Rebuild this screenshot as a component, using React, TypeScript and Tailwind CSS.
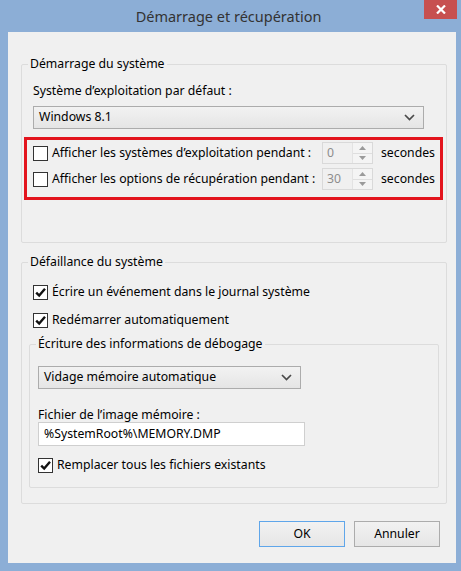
import type { ReactNode } from "react";

const font = { fontFamily: '"Noto Sans", "Open Sans", sans-serif' };

function Check({ checked }: { checked: boolean }) {
  return (
    <span className="flex h-[15px] w-[15px] shrink-0 items-center justify-center border border-[#333333] bg-white">
      {checked && (
        <svg width="13" height="13" viewBox="0 0 13 13">
          <path
            d="M2.2 6.6 L5.2 9.6 L11 2.8"
            fill="none"
            stroke="#111"
            strokeWidth="2.4"
            strokeLinejoin="miter"
          />
        </svg>
      )}
    </span>
  );
}

function Chevron() {
  return (
    <svg width="11" height="7" viewBox="0 0 11 7">
      <path d="M1 1 L5.5 5.5 L10 1" fill="none" stroke="#4a4a4a" strokeWidth="1.7" />
    </svg>
  );
}

function Combo({ value, className }: { value: string; className: string }) {
  return (
    <div
      className={`flex h-[23px] items-center justify-between border border-[#acacac] bg-gradient-to-b from-[#f2f2f2] to-[#e5e5e5] pl-[5px] pr-[8px] text-[12.25px] text-black ${className}`}
    >
      <span>{value}</span>
      <Chevron />
    </div>
  );
}

function Spinner({ value }: { value: string }) {
  return (
    <div className="flex h-[22px] w-[51px] border border-[#d9d9d9]">
      <div className="flex flex-1 items-center pl-[4px] text-[12.25px] text-[#8d8d8d]">{value}</div>
      <div className="flex w-[20px] flex-col border-l border-[#e3e3e3] bg-[#f4f4f4]">
        <div className="flex flex-1 items-center justify-center border-b border-[#dedede]">
          <svg width="7" height="4" viewBox="0 0 7 4">
            <path d="M0 4 L3.5 0 L7 4 Z" fill="#9a9a9a" />
          </svg>
        </div>
        <div className="flex flex-1 items-center justify-center">
          <svg width="7" height="4" viewBox="0 0 7 4">
            <path d="M0 0 L3.5 4 L7 0 Z" fill="#9a9a9a" />
          </svg>
        </div>
      </div>
    </div>
  );
}

function CheckRow({ checked, label, className = "" }: { checked: boolean; label: string; className?: string }) {
  return (
    <div className={`flex h-[16px] items-center gap-[4px] text-[12.25px] text-black ${className}`}>
      <Check checked={checked} />
      <span>{label}</span>
    </div>
  );
}

function TimeoutRow({ label, value }: { label: string; value: string }) {
  return (
    <div className="flex h-[22px] items-center text-[12.25px] text-black">
      <div className="flex w-[289px] items-center gap-[4px] whitespace-nowrap">
        <Check checked={false} />
        <span>{label}</span>
      </div>
      <Spinner value={value} />
      <span className="ml-[8px]">secondes</span>
    </div>
  );
}

function Group({ title, className = "", bodyClass = "", children }: { title: string; className?: string; bodyClass?: string; children: ReactNode }) {
  return (
    <fieldset className={`rounded-[2px] border border-[#dcdcdc] ${className}`}>
      <legend className="ml-[6px] px-[2px] text-[12.25px] leading-[16px] text-black">{title}</legend>
      <div className={bodyClass}>{children}</div>
    </fieldset>
  );
}

export default function App() {
  return (
    <div className="flex h-[571px] w-[461px] flex-col bg-[#8caed6]" style={font}>
      <div className="flex h-[32px] items-start">
        <div className="flex-1" />
        <div className="mt-[6px] text-[14.5px] leading-[20px] text-[#333333]">Démarrage et récupération</div>
        <div className="flex flex-1 justify-end pr-[4px]">
          <div className="flex h-[19px] w-[33px] items-center justify-center bg-[#c75050]">
            <svg width="10" height="9" viewBox="0 0 10 9">
              <path d="M1 0.5 L9 8.5 M9 0.5 L1 8.5" stroke="#fff" strokeWidth="2.2" />
            </svg>
          </div>
        </div>
      </div>

      <div className="ml-[8px] mr-[5px] h-[531px] bg-[#f0f0f0] pl-[13px] pt-[24px]">
        <Group title="Démarrage du système" className="w-[426px]" bodyClass="pb-[42px] pl-[11px]">
          <div className="mt-[11px] text-[12.25px] leading-[16px] text-black">Système d’exploitation par défaut :</div>
          <Combo value="Windows 8.1" className="mt-[7px] w-[391px]" />
          <div className="-ml-[9px] mt-[8px] flex h-[63px] w-[419px] flex-col gap-[4px] border-[3px] border-[#e3141d] pl-[6px] pt-[2px]">
            <TimeoutRow label="Afficher les systèmes d’exploitation pendant :" value="0" />
            <TimeoutRow label="Afficher les options de récupération pendant :" value="30" />
          </div>
        </Group>

        <Group title="Défaillance du système" className="mt-[11px] w-[426px]" bodyClass="pb-[15px] pl-[7px]">
          <CheckRow checked label="Écrire un événement dans le journal système" className="ml-[4px] mt-[14px]" />
          <CheckRow checked label="Redémarrer automatiquement" className="ml-[4px] mt-[12px]" />
          <Group title="Écriture des informations de débogage" className="mt-[8px] w-[410px]" bodyClass="pb-[14px] pl-[8px]">
            <Combo value="Vidage mémoire automatique" className="mt-[14px] w-[263px]" />
            <div className="mt-[18px] text-[12.25px] leading-[15px] text-black">Fichier de l’image mémoire :</div>
            <div className="flex h-[24px] w-[267px] items-center border border-[#cfcfcf] bg-white pl-[5px] text-[12.25px] text-black">
              %SystemRoot%\MEMORY.DMP
            </div>
            <CheckRow checked label="Remplacer tous les fichiers existants" className="mt-[11px]" />
          </Group>
        </Group>

        <div className="mt-[17px] flex justify-end gap-[9px] pr-[16px]">
          <button className="h-[26px] w-[86px] border border-[#5fa6ea] bg-gradient-to-b from-[#f2f2f2] to-[#e6e6e6] text-[12.25px] text-black">
            OK
          </button>
          <button className="h-[26px] w-[86px] border border-[#acacac] bg-gradient-to-b from-[#f2f2f2] to-[#e6e6e6] text-[12.25px] text-black">
            Annuler
          </button>
        </div>
      </div>
    </div>
  );
}
